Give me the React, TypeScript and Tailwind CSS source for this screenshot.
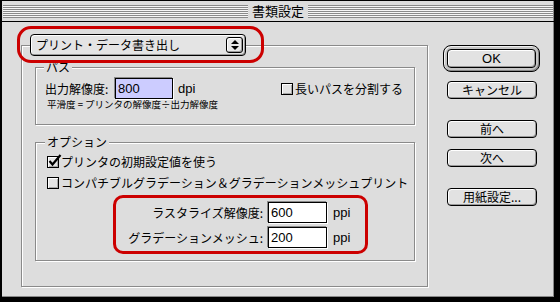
import React from 'react';

const Checkbox = ({ checked = false }: { checked?: boolean }) => (
  <span className="relative inline-block w-[12px] h-[12px] shrink-0 border border-black bg-[#e4e4e4] shadow-[inset_1px_1px_0_#fff,inset_-1px_-1px_0_#a8a8a8]">
    {checked && (
      <svg className="absolute left-[0px] top-[-4px]" width="14" height="14" viewBox="0 0 14 14">
        <path d="M1.5 8 L4.5 11.5 L12.5 2" stroke="#000" strokeWidth="2.2" fill="none" />
      </svg>
    )}
  </span>
);

const MacButton = ({ label, className = '' }: { label: string; className?: string }) => (
  <button className={`flex items-center justify-center rounded-[4px] border border-black bg-[#e2e2e2] shadow-[inset_1px_1px_0_#fff,inset_-1px_-1px_0_#9a9a9a] text-[12px] leading-[16px] ${className}`}>
    {label}
  </button>
);

const Field = ({ value, selected = false, className = '' }: { value: string; selected?: boolean; className?: string }) => (
  <div
    className={`h-[21px] border border-black px-[2px] font-['Liberation_Sans',sans-serif] text-[13px] leading-[19px] shadow-[-1px_-1px_0_#8a8a8a,1px_1px_0_#fff] ${selected ? 'bg-[#ccccff]' : 'bg-white'} ${className}`}
  >
    {value}
  </div>
);

export default function App() {
  return (
    <div className="relative w-[560px] h-[302px] flex flex-col bg-[#dddddd] border-black border-l-2 border-t border-r-[6px] border-b-[5px] shadow-[inset_-1px_-1px_0_#888] font-['Noto_Sans_CJK_JP',sans-serif] text-black">
      {/* title bar */}
      <div className="h-[21px] shrink-0 flex items-center gap-[4px] px-[1px] border-b border-black">
        <div className="flex-1 h-[13px] bg-[repeating-linear-gradient(to_bottom,#8a8a8a_0px,#8a8a8a_1px,#f6f6f6_1px,#f6f6f6_2px)]" />
        <span className="text-[13px] leading-[16px]">書類設定</span>
        <div className="flex-1 h-[13px] bg-[repeating-linear-gradient(to_bottom,#8a8a8a_0px,#8a8a8a_1px,#f6f6f6_1px,#f6f6f6_2px)]" />
      </div>

      <div className="flex">
        {/* main group */}
        <div className="mt-[23px] ml-[19px] w-[407px] h-[242px] flex flex-col border border-[#8a8a8a] shadow-[inset_1px_1px_0_#fff,1px_1px_0_#fff]">
          <div className="-mt-[12px] ml-[8px] w-[216px] h-[22px] flex items-center rounded-[4px] border border-black bg-[#e4e4e4] shadow-[inset_1px_1px_0_#fff,inset_-1px_-1px_0_#9a9a9a]">
            <span className="flex-1 pl-[5px] text-[12px] leading-[16px]">プリント・データ書き出し</span>
            <span className="mr-[2px] w-[17px] h-[16px] flex items-center justify-center rounded-[3px] border border-black bg-[#e8e8e8] shadow-[inset_1px_1px_0_#fff,inset_-1px_-1px_0_#9a9a9a]">
              <svg width="8" height="11" viewBox="0 0 8 11">
                <path d="M4 0 L8 4 L0 4 Z M0 6 L8 6 L4 10 Z" fill="#000" />
              </svg>
            </span>
          </div>

          {/* パス */}
          <div className="mt-[11px] ml-[13px] w-[380px] h-[58px] flex flex-col border border-[#8a8a8a] shadow-[inset_1px_1px_0_#fff,1px_1px_0_#fff]">
            <span className="-mt-[8px] ml-[8px] w-fit h-[14px] px-[2px] bg-[#dddddd] text-[12px] leading-[14px]">パス</span>
            <div className="mt-[4px] h-[21px] flex items-center pl-[9px]">
              <span className="w-[70px] text-[12px] leading-[16px]">出力解像度:</span>
              <Field value="800" selected className="w-[58px]" />
              <span className="ml-[5px] w-[103px] font-['Liberation_Sans',sans-serif] text-[13px] leading-[16px]">dpi</span>
              <Checkbox />
              <span className="ml-[2px] text-[12px] leading-[16px]">長いパスを分割する</span>
            </div>
            <span className="-mt-[1px] pl-[11px] h-[12px] text-[9.5px] leading-[12px]">平滑度 = プリンタの解像度÷出力解像度</span>
          </div>

          {/* オプション */}
          <div className="mt-[17px] ml-[13px] w-[380px] h-[119px] flex flex-col border border-[#8a8a8a] shadow-[inset_1px_1px_0_#fff,1px_1px_0_#fff]">
            <span className="-mt-[8px] ml-[9px] w-fit h-[14px] px-[2px] bg-[#dddddd] text-[12px] leading-[14px]">オプション</span>
            <div className="mt-[5px] h-[16px] flex items-center gap-[2px] pl-[11px]">
              <Checkbox checked />
              <span className="text-[12px] leading-[16px]">プリンタの初期設定値を使う</span>
            </div>
            <div className="mt-[5px] h-[16px] flex items-center gap-[2px] pl-[11px]">
              <Checkbox />
              <span className="text-[12px] leading-[16px] whitespace-nowrap">コンパチブルグラデーション＆グラデーションメッシュプリント</span>
            </div>
            <div className="mt-[11px] h-[21px] flex items-center">
              <span className="w-[227px] text-right text-[12px] leading-[16px]">ラスタライズ解像度:</span>
              <Field value="600" className="ml-[5px] w-[59px]" />
              <span className="ml-[6px] font-['Liberation_Sans',sans-serif] text-[13px] leading-[16px]">ppi</span>
            </div>
            <div className="mt-[4px] h-[21px] flex items-center">
              <span className="w-[227px] text-right text-[12px] leading-[16px]">グラデーションメッシュ:</span>
              <Field value="200" className="ml-[5px] w-[59px]" />
              <span className="ml-[6px] font-['Liberation_Sans',sans-serif] text-[13px] leading-[16px]">ppi</span>
            </div>
          </div>
        </div>

        {/* buttons */}
        <div className="mt-[23px] ml-[15px] flex flex-col">
          <div className="w-[97px] h-[27px] p-[3px] rounded-[8px] border border-black bg-[#c4c4c4] shadow-[inset_1px_1px_0_#f0f0f0,inset_-1px_-1px_0_#888]">
            <MacButton label="OK" className="w-full h-full font-['Liberation_Sans',sans-serif] text-[13px]" />
          </div>
          <MacButton label="キャンセル" className="mt-[9px] ml-[4px] w-[90px] h-[18px]" />
          <MacButton label="前へ" className="mt-[21px] ml-[4px] w-[90px] h-[18px]" />
          <MacButton label="次へ" className="mt-[11px] ml-[4px] w-[90px] h-[18px]" />
          <MacButton label="用紙設定..." className="mt-[21px] ml-[4px] w-[90px] h-[18px]" />
        </div>
      </div>

      {/* red annotations */}
      <div className="absolute left-[15px] top-[25px] w-[247px] h-[37px] rounded-[14px] border-[3px] border-[#cc0000]" />
      <div className="absolute left-[111px] top-[194px] w-[255px] h-[59px] rounded-[10px] border-[3px] border-[#cc0000]" />
    </div>
  );
}
